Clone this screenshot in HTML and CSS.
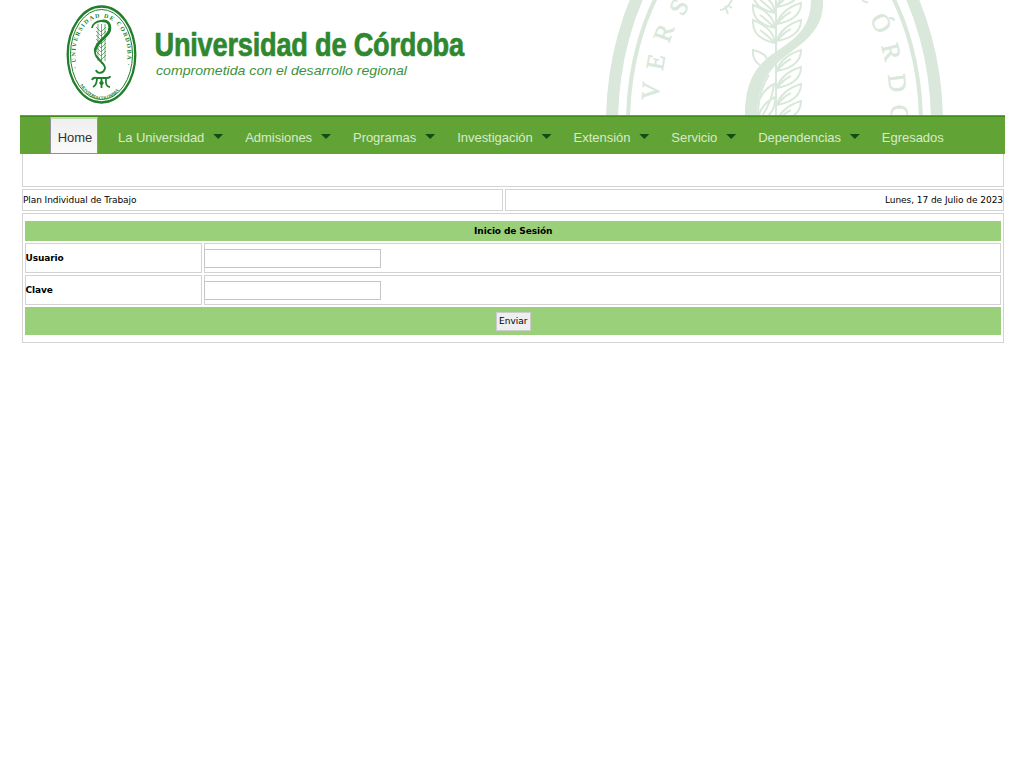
FILE: index.html
```html
<!DOCTYPE html>
<html lang="es">
<head>
<meta charset="utf-8">
<title>Universidad de Córdoba</title>
<link rel="stylesheet" href="styles.css">
</head>
<body>
<header class="banner">
<svg width="1024" height="115" viewBox="0 0 1024 115">
  <defs>
    <path id="ring" d="M77.900 70 A26 37 0 1 1 125.100 70"/>
    <path id="ringlow" d="M77 79 A29 44 0 0 0 126 79"/>
    <path id="leafR" d="M777 0 C779 -9 788 -17 801 -21 C801 -10 793 -3 777 0 Q784 -9 791 -12"/>
    <path id="leafL" d="M775 0 C774 -10 766 -18 753 -23 C752 -11 760 -3 775 0 Q766 -9 760 -13"/>
  </defs>
  <g fill="none" stroke="#207f2b">
    <ellipse cx="101.500" cy="54.500" rx="33.800" ry="48" stroke-width="2.300"/>
    <ellipse cx="101.500" cy="54.500" rx="31" ry="45" stroke-width="1"/>
    <path d="M101.500 24 V64 M96 27 l5 5 5-5 M96 31 l5 5 5-5 M96 35 l5 5 5-5 M96 39 l5 5 5-5 M96 43 l5 5 5-5 M96 47 l5 5 5-5 M96 51 l5 5 5-5 M96 55 l5 5 5-5 M98 24V61 M105 24V61" stroke-width="1" opacity=".62"/>
    <path d="M92 28 C93 20 108 18 110 26 C113 37 95 40 95 52 C95 60 105 62 105 68 C104 74 97 74 96 70" stroke-width="1.800"/>
    <path d="M102 21 C109 20 111 26 109 31 C106 38 96 42 95 51" stroke-width="2.600"/>
    <path d="M92 80 Q93 77 97 78 H107 Q110 78 110 76 M97 78 Q97 85 93 87 M106 78 Q105 87 110 87 M101.500 79 V88" stroke-width="1.800"/>
    <path d="M99 83 l2.500-3 2.500 3 -2.500 3z" fill="#207f2b" stroke="none"/>
  </g>
  <g class="emblem-text">
    <text><textPath href="#ring" startOffset="2" textLength="124">· UNIVERSIDAD DE CORDOBA ·</textPath></text>
    <text class="emblem-low"><textPath href="#ringlow" startOffset="7" textLength="47">MONTERIA-COLOMBIA</textPath></text>
  </g>
  <text class="brand" x="154.500" y="56" transform="translate(154.500 0) scale(.8 1) translate(-154.500 0)" textLength="387" lengthAdjust="spacing">Universidad de Córdoba</text>
  <text class="tagline" x="156" y="75" textLength="251" lengthAdjust="spacingAndGlyphs">comprometida con el desarrollo regional</text>
  <g fill="none" stroke="#d9e8db">
    <ellipse cx="774.500" cy="124" rx="162.500" ry="236" stroke-width="12"/>
    <ellipse cx="774.500" cy="124" rx="146.500" ry="215" stroke-width="4"/>
    <g stroke-width="2">
      <path d="M776 0V115"/>
      <use href="#leafR" y="7"/><use href="#leafR" y="24"/><use href="#leafR" y="41"/>
      <use href="#leafR" y="71"/><use href="#leafR" y="88"/><use href="#leafR" y="105"/><use href="#leafR" y="122"/>
      <use href="#leafL" y="13"/><use href="#leafL" y="28"/><use href="#leafL" y="43"/><path d="M767 63 Q769 54 753 50 Q752 60 760 65"/>
      <path d="M758 116 Q758 91 769 75 M762 116 Q772 102 774 84 Q762 90 758 104 M768 116 Q776 108 775 97 Q762 104 759 115"/>
      <path d="M720 10 Q727 10 733 -2 M725 6 L728 14 M727 5 L732 8"/>
      <path d="M862 0 Q866 3 868 2"/>
    </g>
  </g>
  <path d="M745 116 C745 83 755 66 774 53 C797 38 811 27 811 -1 L823 -1 C824 21 815 34 795 49 C775 63 757 79 757 116Z" fill="#d9e8db"/>
  <g class="seal-text">
    <text transform="translate(679 7) rotate(-61)" y="8">S</text>
    <text transform="translate(664 33) rotate(-70)" y="8">R</text>
    <text transform="translate(656 62) rotate(-80)" y="8">E</text>
    <text transform="translate(651 91) rotate(-86)" y="8">V</text>
    <text transform="translate(881 23) rotate(64)" y="8">Ó</text>
    <text transform="translate(891 52) rotate(76)" y="8">R</text>
    <text transform="translate(897 83) rotate(83)" y="8">D</text>
    <text transform="translate(899 113) rotate(88)" y="8">C</text>
  </g>
</svg>
</header>
<nav class="menu">
  <a class="home">Home</a>
  <a class="item drop">La Universidad</a>
  <a class="item drop">Admisiones</a>
  <a class="item drop">Programas</a>
  <a class="item drop">Investigación</a>
  <a class="item drop">Extensión</a>
  <a class="item drop">Servicio</a>
  <a class="item drop">Dependencias</a>
  <a class="item">Egresados</a>
</nav>
<main class="content">
  <div class="blank"></div>
  <div class="info">
    <div class="cell title">Plan Individual de Trabajo</div>
    <div class="cell date">Lunes, 17 de Julio de 2023</div>
  </div>
  <form class="login">
    <div class="heading">Inicio de Sesión</div>
    <div class="row"><label class="cell label" for="user">Usuario</label><div class="cell field"><input id="user" type="text"></div></div>
    <div class="row"><label class="cell label" for="pass">Clave</label><div class="cell field"><input id="pass" type="password"></div></div>
    <div class="actions"><button type="button">Enviar</button></div>
  </form>
</main>
</body>
</html>
```
FILE: styles.css
```css
*, *::after { box-sizing: border-box; }
body { margin: 0; background: #fff; color: #000; font-family: "DejaVu Sans", sans-serif; }
.banner { height: 115px; overflow: hidden; }
.banner svg { display: block; }
.brand { font: bold 34px "Liberation Sans", sans-serif; fill: #2f872f; stroke: #2f872f; stroke-width: .7px; }
.tagline { font: italic 13px "Liberation Sans", sans-serif; fill: #3d913d; }
.emblem-text { font: bold 6px "Liberation Serif", serif; fill: #207f2b; }
.emblem-low { font-size: 4.5px; }
.seal-text { font: 25px "Liberation Serif", serif; fill: #d9e8db; stroke: #d9e8db; stroke-width: .6px; text-anchor: middle; }
.menu { display: flex; width: 985px; height: 39px; margin-left: 20px; padding-left: 30px; background: #62a336; border-top: 1px solid #6e9d50; box-shadow: inset 0 1px #3f8c1b; font: 13px/44px "Liberation Sans", sans-serif; }
.home { flex: none; width: 48px; height: 37px; margin: 1px 20px 0 0; padding-left: 2px; border: 1px solid #919191; border-top: 2px solid #c0dbac; background: linear-gradient(#efefef, #fafafa); color: #333; line-height: 38px; text-align: center; }
.item { flex: none; display: flex; align-items: center; margin-right: 22px; color: #d7ebca; height: 44px; white-space: nowrap; letter-spacing: -.03px; }
.drop::after { content: ""; width: 10px; height: 5px; margin: -3px 0 0 8.9px; background: #134d14; clip-path: polygon(0 0, 100% 0, 50% 100%); }
.content { width: 982px; margin-left: 22px; font-size: 9px; }
.blank { height: 33px; border: 1px solid #d3d3d3; border-top: 0; }
.info { display: grid; grid-template-columns: 481px 1fr; gap: 2px; height: 22px; margin-top: 2px; }
.cell { border: 1px solid #d3d3d3; display: flex; align-items: center; }
.title { white-space: nowrap; letter-spacing: -.08px; }
.date { justify-content: flex-end; padding-right: 0; white-space: nowrap; letter-spacing: -.05px; }
.login { height: 130px; margin-top: 2px; padding: 7px 2px 0 1.5px; border: 1px solid #d3d3d3; display: flex; flex-direction: column; gap: 2px; }
.heading { height: 20px; padding-left: 1px; background: #9bd07a; font-weight: bold; line-height: 20px; text-align: center; letter-spacing: -.1px; }
.row { display: grid; grid-template-columns: 177px 1fr; gap: 2px; height: 30px; }
.label { font-weight: bold; letter-spacing: -.1px; }
input { width: 177px; height: 19px; border: 1px solid #c5c5c5; padding: 1px; background: #fff; font-size: 9px; }
.field input { margin-left: -1px; }
.actions { height: 28px; padding-left: 1px; display: flex; justify-content: center; align-items: center; background: #9bd07a; }
button { width: 35px; height: 19px; padding: 0; border: 1px solid #ccc; background: #efefef; color: #000; font: 9px "DejaVu Sans", sans-serif; }
```
